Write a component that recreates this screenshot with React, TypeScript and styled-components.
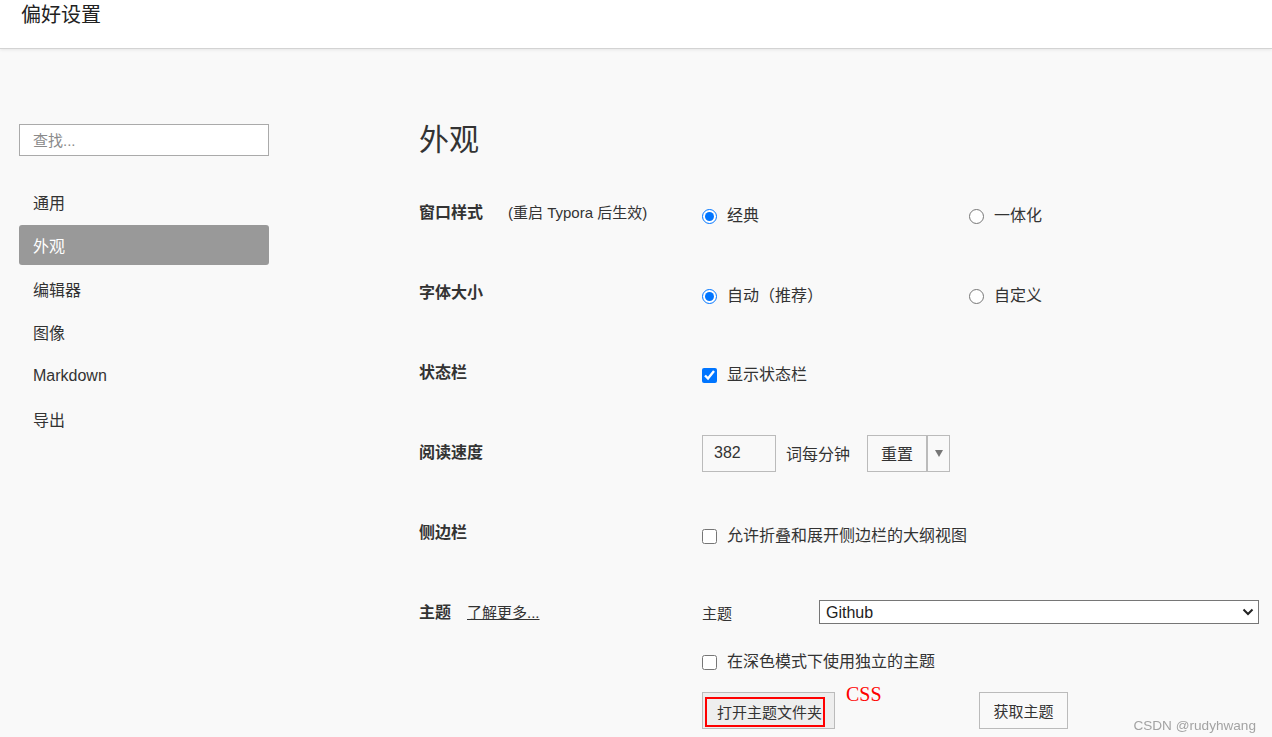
import React from "react";
import styled, { createGlobalStyle } from "styled-components";

const GlobalStyle = createGlobalStyle`
  html, body { margin: 0; padding: 0; background: #f9f9f9; }
  body {
    font-family: "Liberation Sans", "Noto Sans CJK SC", sans-serif;
    color: #333;
    overflow: hidden;
  }
  * { box-sizing: border-box; }
`;

const Header = styled.header`
  height: 49px;
  background: #fff;
  border-bottom: 1px solid #d3d3d3;
  box-shadow: 0 1px 3px rgba(0, 0, 0, 0.08);
  padding-left: 21px;
`;

const Title = styled.h1`
  margin: 0;
  font-size: 20px;
  font-weight: 400;
  line-height: 30px;
  color: #222;
`;

const Body = styled.div`
  display: flex;
`;

const Sidebar = styled.aside`
  flex: none;
  width: 250px;
  margin-left: 19px;
  padding-top: 75px;
`;

const Search = styled.input`
  display: block;
  width: 250px;
  height: 32px;
  border: 1px solid #aaa;
  background: #fff;
  padding: 0 0 0 13px;
  font-family: inherit;
  font-size: 15px;
  color: #333;
  outline: none;
  &::placeholder { color: #8a8a8a; }
`;

const Nav = styled.nav`
  display: flex;
  flex-direction: column;
  gap: 3.4px;
  margin-top: 26px;
`;

const NavItem = styled.div<{ $active?: boolean }>`
  height: 40px;
  display: flex;
  align-items: center;
  padding-left: 14px;
  font-size: 16px;
  border-radius: 3px;
  background: ${(p) => (p.$active ? "#999" : "transparent")};
  color: ${(p) => (p.$active ? "#fff" : "#333")};
`;

const Main = styled.main`
  flex: 1;
  margin-left: 150px;
  padding-top: 71px;
  padding-right: 13px;
`;

const PageTitle = styled.h2`
  margin: 0 0 13px;
  font-size: 30px;
  font-weight: 400;
  line-height: 40px;
  color: #333;
`;

const Row = styled.div`
  display: grid;
  grid-template-columns: 283px 267px 1fr;
  height: 80px;
  align-items: center;
`;

const ThemeRow = styled.div`
  display: grid;
  grid-template-columns: 283px 1fr;
  align-items: start;
`;

const LabelCell = styled.div<{ $top?: number }>`
  display: flex;
  align-items: center;
  line-height: 24px;
  padding-top: ${(p) => p.$top ?? 0}px;
`;

const Label = styled.span`
  font-size: 16px;
  font-weight: 700;
  color: #333;
`;

const Note = styled.span`
  font-size: 15px;
  margin-left: 25px;
  color: #333;
`;

const LearnMore = styled.a`
  font-size: 15px;
  margin-left: 16px;
  color: #333;
  text-decoration: underline;
`;

const Option = styled.label<{ $shift?: number }>`
  display: inline-flex;
  align-items: center;
  gap: 10px;
  font-size: 16px;
  line-height: 24px;
  color: #333;
  margin-top: ${(p) => p.$shift ?? 0}px;
`;

const Radio = styled.input.attrs({ type: "radio" })`
  width: 15px;
  height: 15px;
  margin: 0;
  accent-color: #0075ff;
`;

const Check = styled.input.attrs({ type: "checkbox" })`
  width: 15px;
  height: 15px;
  margin: 0;
  accent-color: #0075ff;
`;

const Span2 = styled.div`
  grid-column: 2 / span 2;
  display: flex;
  align-items: center;
`;

const NumberBox = styled.input`
  width: 74px;
  height: 37px;
  border: 1px solid #bbb;
  background: transparent;
  padding: 0 0 0 11px;
  font-family: inherit;
  font-size: 16px;
  color: #333;
  outline: none;
`;

const Unit = styled.span`
  font-size: 16px;
  margin: 0 17px 0 10px;
`;

const Btn = styled.button<{ $w: number; $size?: number }>`
  width: ${(p) => p.$w}px;
  height: 37px;
  border: 1px solid #bbb;
  background: transparent;
  font-family: inherit;
  font-size: ${(p) => p.$size ?? 15}px;
  color: #333;
  padding: 0;
  display: inline-flex;
  align-items: center;
  justify-content: center;
`;

const Caret = styled.span`
  width: 0;
  height: 0;
  border-left: 4px solid transparent;
  border-right: 4px solid transparent;
  border-top: 7px solid #777;
`;

const ThemeStack = styled.div`
  padding-top: 27px;
  display: flex;
  flex-direction: column;
`;

const ThemeLine = styled.div`
  display: flex;
  align-items: center;
`;

const SubLabel = styled.span`
  width: 117px;
  font-size: 15px;
  color: #333;
`;

const SelectWrap = styled.div`
  position: relative;
  flex: 1;
  height: 24px;
`;

const Select = styled.select`
  width: 100%;
  height: 24px;
  appearance: none;
  border: 1px solid #767676;
  border-radius: 0;
  background: #fff;
  padding: 0 0 0 6px;
  font-family: inherit;
  font-size: 16px;
  color: #222;
  outline: none;
`;

const Chevron = styled.svg`
  position: absolute;
  right: 5px;
  top: 7px;
  pointer-events: none;
`;

const CheckLine = styled.div`
  margin-top: 26px;
`;

const ButtonRow = styled.div`
  position: relative;
  margin-top: 18px;
  display: flex;
  gap: 144px;
`;

const OpenBtn = styled(Btn)`
  justify-content: flex-start;
  padding: 2px 0 0 2px;
  background: #eee;
`;

const RedBox = styled.span`
  width: 120px;
  height: 30px;
  border: 2px solid #f00;
  display: flex;
  align-items: center;
  padding-left: 10px;
  font-size: 15px;
  white-space: nowrap;
`;

const CssNote = styled.span`
  position: absolute;
  left: 144px;
  top: -8px;
  font-family: "Liberation Serif", serif;
  font-size: 20px;
  line-height: 1;
  color: #f00;
`;

const Watermark = styled.div`
  position: fixed;
  right: 16px;
  bottom: 4px;
  font-family: "Liberation Sans", sans-serif;
  font-size: 13.6px;
  line-height: 14px;
  color: #a3a3a3;
`;

export default function App() {
  return (
    <>
      <GlobalStyle />
      <Header>
        <Title>偏好设置</Title>
      </Header>
      <Body>
        <Sidebar>
          <Search placeholder="查找..." />
          <Nav>
            <NavItem>通用</NavItem>
            <NavItem $active>外观</NavItem>
            <NavItem>编辑器</NavItem>
            <NavItem>图像</NavItem>
            <NavItem>Markdown</NavItem>
            <NavItem>导出</NavItem>
          </Nav>
        </Sidebar>
        <Main>
          <PageTitle>外观</PageTitle>
          <Row>
            <LabelCell>
              <Label>窗口样式</Label>
              <Note>(重启 Typora 后生效)</Note>
            </LabelCell>
            <Option $shift={6}>
              <Radio name="win" defaultChecked />
              经典
            </Option>
            <Option $shift={6}>
              <Radio name="win" />
              一体化
            </Option>
          </Row>
          <Row>
            <LabelCell>
              <Label>字体大小</Label>
            </LabelCell>
            <Option $shift={6}>
              <Radio name="font" defaultChecked />
              自动（推荐）
            </Option>
            <Option $shift={6}>
              <Radio name="font" />
              自定义
            </Option>
          </Row>
          <Row>
            <LabelCell>
              <Label>状态栏</Label>
            </LabelCell>
            <Span2>
              <Option $shift={4}>
                <Check defaultChecked />
                显示状态栏
              </Option>
            </Span2>
          </Row>
          <Row>
            <LabelCell>
              <Label>阅读速度</Label>
            </LabelCell>
            <Span2>
              <NumberBox defaultValue="382" />
              <Unit>词每分钟</Unit>
              <Btn $w={60} $size={16}>重置</Btn>
              <Btn $w={23}>
                <Caret />
              </Btn>
            </Span2>
          </Row>
          <Row>
            <LabelCell>
              <Label>侧边栏</Label>
            </LabelCell>
            <Span2>
              <Option $shift={6}>
                <Check />
                允许折叠和展开侧边栏的大纲视图
              </Option>
            </Span2>
          </Row>
          <ThemeRow>
            <LabelCell $top={28}>
              <Label>主题</Label>
              <LearnMore>了解更多...</LearnMore>
            </LabelCell>
            <ThemeStack>
              <ThemeLine>
                <SubLabel>主题</SubLabel>
                <SelectWrap>
                  <Select defaultValue="Github">
                    <option>Github</option>
                  </Select>
                  <Chevron width="12" height="10" viewBox="0 0 12 10">
                    <path d="M1.5 2.5 L6 7 L10.5 2.5" fill="none" stroke="#222" strokeWidth="2" />
                  </Chevron>
                </SelectWrap>
              </ThemeLine>
              <CheckLine>
                <Option>
                  <Check />
                  在深色模式下使用独立的主题
                </Option>
              </CheckLine>
              <ButtonRow>
                <OpenBtn $w={133}>
                  <RedBox>打开主题文件夹</RedBox>
                </OpenBtn>
                <CssNote>CSS</CssNote>
                <Btn $w={89}>获取主题</Btn>
              </ButtonRow>
            </ThemeStack>
          </ThemeRow>
        </Main>
      </Body>
      <Watermark>CSDN @rudyhwang</Watermark>
    </>
  );
}
